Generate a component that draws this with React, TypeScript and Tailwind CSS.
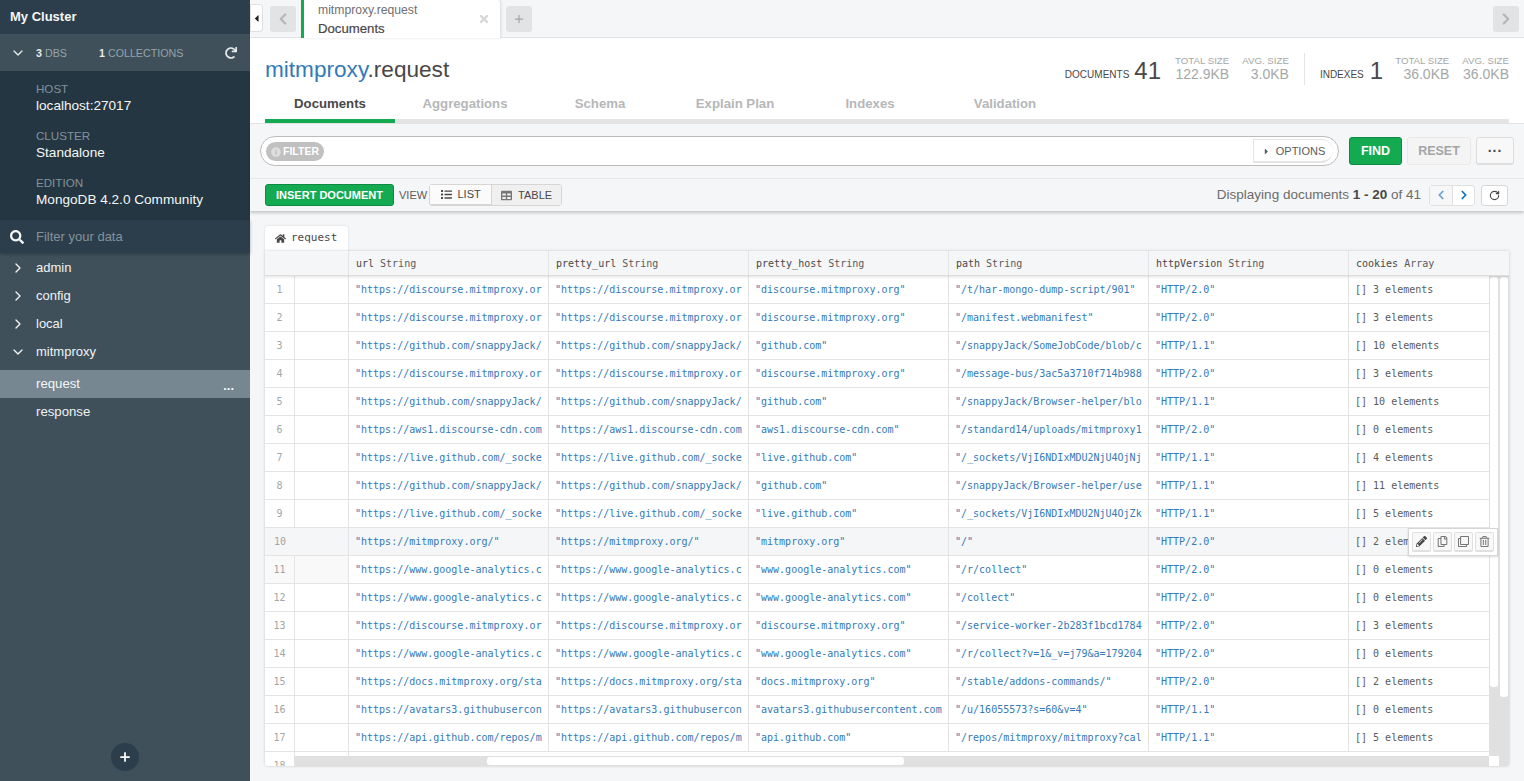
import { ChevronDown, ChevronRight, ChevronLeft, RotateCw, Plus } from "lucide-react";
import { FaHome, FaList, FaTable, FaInfoCircle, FaCaretRight, FaCaretLeft, FaSearch, FaRedo, FaTimes, FaPencilAlt, FaRegClone, FaRegCopy, FaRegTrashAlt } from "react-icons/fa";

const sans = "font-['Liberation_Sans',Arial,sans-serif]";
const mono = "font-['DejaVu_Sans_Mono',monospace]";

const rows = [
  ["https://discourse.mitmproxy.or", "discourse.mitmproxy.org", "/t/har-mongo-dump-script/901", "HTTP/2.0", "3"],
  ["https://discourse.mitmproxy.or", "discourse.mitmproxy.org", "/manifest.webmanifest", "HTTP/2.0", "3"],
  ["https://github.com/snappyJack/", "github.com", "/snappyJack/SomeJobCode/blob/c", "HTTP/1.1", "10"],
  ["https://discourse.mitmproxy.or", "discourse.mitmproxy.org", "/message-bus/3ac5a3710f714b988", "HTTP/2.0", "3"],
  ["https://github.com/snappyJack/", "github.com", "/snappyJack/Browser-helper/blo", "HTTP/1.1", "10"],
  ["https://aws1.discourse-cdn.com", "aws1.discourse-cdn.com", "/standard14/uploads/mitmproxy1", "HTTP/2.0", "0"],
  ["https://live.github.com/_socke", "live.github.com", "/_sockets/VjI6NDIxMDU2NjU4OjNj", "HTTP/1.1", "4"],
  ["https://github.com/snappyJack/", "github.com", "/snappyJack/Browser-helper/use", "HTTP/1.1", "11"],
  ["https://live.github.com/_socke", "live.github.com", "/_sockets/VjI6NDIxMDU2NjU4OjZk", "HTTP/1.1", "5"],
  ["https://mitmproxy.org/\"", "mitmproxy.org", "/", "HTTP/2.0", "2"],
  ["https://www.google-analytics.c", "www.google-analytics.com", "/r/collect", "HTTP/2.0", "0"],
  ["https://www.google-analytics.c", "www.google-analytics.com", "/collect", "HTTP/2.0", "0"],
  ["https://discourse.mitmproxy.or", "discourse.mitmproxy.org", "/service-worker-2b283f1bcd1784", "HTTP/2.0", "3"],
  ["https://www.google-analytics.c", "www.google-analytics.com", "/r/collect?v=1&_v=j79&a=179204", "HTTP/2.0", "0"],
  ["https://docs.mitmproxy.org/sta", "docs.mitmproxy.org", "/stable/addons-commands/", "HTTP/2.0", "2"],
  ["https://avatars3.githubusercon", "avatars3.githubusercontent.com", "/u/16055573?s=60&v=4", "HTTP/1.1", "0"],
  ["https://api.github.com/repos/m", "api.github.com", "/repos/mitmproxy/mitmproxy?cal", "HTTP/1.1", "5"],
  ["", "", "", "", ""],
];

const columns = [
  ["url", "String"],
  ["pretty_url", "String"],
  ["pretty_host", "String"],
  ["path", "String"],
  ["httpVersion", "String"],
];

function Stat({ label, value }: { label: string; value: string }) {
  return (
    <div className="flex flex-col items-end mt-[1px]">
      <div className="text-[9.7px] leading-[13px] text-[#a5a8a8]">{label}</div>
      <div className="text-[14px] leading-[13px] mt-[1px] text-[#a5a8a8]">{value}</div>
    </div>
  );
}

function DbRow({ name, open }: { name: string; open?: boolean }) {
  return (
    <div className="h-7 flex items-center text-[13px] text-[#f0f3f3]">
      <div className="w-9 pl-[10px] shrink-0">
        {open ? <ChevronDown size={16} /> : <ChevronRight size={16} />}
      </div>
      {name}
    </div>
  );
}

function Info({ label, value }: { label: string; value: string }) {
  return (
    <div className="pl-9 h-[47px]">
      <div className="text-[11.6px] leading-[16px] text-[#84929a]">{label}</div>
      <div className="text-[13.6px] leading-[18px] text-[#f5f7f7]">{value}</div>
    </div>
  );
}

function Sidebar() {
  return (
    <div className="w-[250px] shrink-0 h-full flex flex-col bg-[#3f505a] relative">
      <div className="h-[34px] shrink-0 bg-[#2c3e4c] pl-2.5 flex items-center text-[13px] font-bold text-[#f5f7f7]">My Cluster</div>
      <div className="h-[37px] shrink-0 bg-[#3f505a] flex items-center pt-px text-[10.7px] text-[#96a3a9]">
        <div className="w-9 pl-[10px] shrink-0 text-[#e6ebeb]"><ChevronDown size={16} /></div>
        <span className="w-[63px]"><b className="text-[#e6ebeb]">3</b> DBS</span>
        <span><b className="text-[#e6ebeb]">1</b> COLLECTIONS</span>
        <FaRedo size={12} className="ml-auto mr-[13px] text-[#e6ebeb]" />
      </div>
      <div className="h-[149px] shrink-0 bg-[#243642] pt-[10px]">
        <Info label="HOST" value="localhost:27017" />
        <Info label="CLUSTER" value="Standalone" />
        <Info label="EDITION" value="MongoDB 4.2.0 Community" />
      </div>
      <div className="h-[33px] shrink-0 bg-[#2c3e4c] flex items-center text-[13px] text-[#84929a] shadow-[0_1px_3px_rgba(0,0,0,0.3)]">
        <div className="w-9 pl-2.5 shrink-0 text-[#f5f7f7]"><FaSearch size={14} /></div>
        Filter your data
      </div>
      <div className="pt-[1px]">
        <DbRow name="admin" />
        <DbRow name="config" />
        <DbRow name="local" />
        <DbRow name="mitmproxy" open />
        <div className="h-7 mt-[4px] flex items-center pl-9 pr-4 text-[13.2px] text-[#f5f7f7] bg-[#768791] justify-between">
          request
          <span className="text-[13px] font-bold mt-1">...</span>
        </div>
        <div className="h-7 flex items-center pl-9 text-[13.2px] text-[#f0f3f3]">response</div>
      </div>
      <div className="absolute left-[111px] bottom-[10px] w-7 h-7 rounded-full bg-[#2c3e4c] flex items-center justify-center text-white">
        <Plus size={14} strokeWidth={3} />
      </div>
    </div>
  );
}

function TopTabs() {
  return (
    <div className="h-[38px] shrink-0 bg-[#f5f6f7] border-b border-[#e4e4e4] flex items-stretch">
      <div className="w-[13px] h-[28px] mt-[4px] bg-white border border-[#e0e0e0] rounded-r-[3px] flex items-center justify-center text-[#222]">
        <FaCaretLeft size={11} />
      </div>
      <div className="w-[26px] h-[26px] mt-[6px] ml-[7px] bg-[#e2e3e4] rounded-[3px] flex items-center justify-center text-[#b4b6b7]">
        <ChevronLeft size={18} strokeWidth={3} />
      </div>
      <div className="w-[199px] h-[38px] ml-[5px] bg-white border-l-[3px] border-[#13aa52] rounded-tr-[3px] pl-[14px] pt-[2px] relative z-10 shadow-[1px_0_3px_rgba(0,0,0,0.12)]">
        <div className="text-[12.2px] leading-[15px] mt-[1px] text-[#6f7071]">mitmproxy.request</div>
        <div className="text-[13.2px] leading-[20px] mt-[1px] text-[#494747] [-webkit-text-stroke:0.2px_#494747]">Documents</div>
        <FaTimes size={12} className="absolute right-[10px] top-[13px] text-[#d6d6d6]" />
      </div>
      <div className="w-[26px] h-[26px] mt-[6px] ml-[6px] bg-[#e2e3e4] rounded-[3px] flex items-center justify-center text-[#a3a5a6]">
        <Plus size={12} strokeWidth={2.5} />
      </div>
      <div className="w-[26px] h-[26px] mt-[6px] ml-auto mr-[5px] bg-[#e2e3e4] rounded-[3px] flex items-center justify-center text-[#b4b6b7]">
        <ChevronRight size={18} strokeWidth={3} />
      </div>
    </div>
  );
}

function Header() {
  const tabs = ["Aggregations", "Schema", "Explain Plan", "Indexes", "Validation"];
  return (
    <div className="h-[86px] shrink-0 bg-white border-b border-[#e4e4e4] px-[15px] flex flex-col">
      <div className="h-[53px] shrink-0 flex items-start justify-between">
        <div className="text-[22.6px] leading-[28px] mt-[18px] text-[#494747]">
          <span className="text-[#337ab7]">mitmproxy</span>.request
        </div>
        <div className="flex items-start mt-[15px]">
          <span className="text-[10px] leading-[12px] text-[#494747] mt-[16px] mr-[5px]">DOCUMENTS</span>
          <span className="text-[24px] leading-[28px] mt-[4px] text-[#494747] mr-[14px]">41</span>
          <Stat label="TOTAL SIZE" value="122.9KB" />
          <div className="w-[13px]" />
          <Stat label="AVG. SIZE" value="3.0KB" />
          <div className="w-px h-8 bg-[#e4e4e4] mx-[15px]" />
          <span className="text-[10px] leading-[12px] text-[#494747] mt-[16px] mr-[6px]">INDEXES</span>
          <span className="text-[24px] leading-[28px] mt-[4px] text-[#494747] mr-[12px]">1</span>
          <Stat label="TOTAL SIZE" value="36.0KB" />
          <div className="w-[13px]" />
          <Stat label="AVG. SIZE" value="36.0KB" />
        </div>
      </div>
      <div className="flex shrink-0 gap-[5px] h-[28px] border-b-[4px] border-[#e4e4e4] box-content">
        <div className="w-[130px] h-[28px] text-center text-[13.2px] font-bold text-[#494747] border-b-[4px] border-[#13aa52] leading-[26px] box-content">Documents</div>
        {tabs.map((t) => (
          <div key={t} className="w-[130px] text-[13.2px] font-bold text-[#b5b7b8] leading-[26px] text-center">{t}</div>
        ))}
      </div>
    </div>
  );
}

function QueryBar() {
  return (
    <div className="shrink-0 bg-[#f5f6f7] shadow-[0_2px_3px_rgba(0,0,0,0.2)] relative z-10">
      <div className="h-[55px] border-b border-[#e8e8e8] flex items-center pl-[10px] pr-[10px] gap-[5px]">
        <div className="flex-1 h-[30px] rounded-full border border-[#bcbcbc] bg-white flex items-center pl-[5px] pr-[5px] mr-[5px]">
          <div className="h-[19px] w-[58px] rounded-full bg-[#c0c0c0] flex items-center pl-[5px] pt-px text-[10.5px] font-bold text-white gap-[2px]">
            <FaInfoCircle size={10} className="text-[#dedede]" /> FILTER
          </div>
          <div className="ml-auto h-[24px] w-[80px] border border-[#e4e4e4] border-b-2 border-r-0 rounded-r-full flex items-center justify-center gap-[5px] pt-px text-[11px] text-[#5b5b5b]">
            <FaCaretRight size={9} /> OPTIONS
          </div>
        </div>
        <div className="w-[53px] h-7 rounded-[3px] bg-[#13aa52] border border-[#0f8a42] flex items-center justify-center text-[12.5px] font-bold text-white">FIND</div>
        <div className="w-[64px] h-7 rounded-[3px] bg-[#f4f4f4] border border-[#e8e8e8] flex items-center justify-center text-[12.5px] font-bold text-[#a3a5a6]">RESET</div>
        <div className="w-[38px] h-7 rounded-[3px] bg-[#f8f8f8] border border-[#dedede] border-b-2 flex items-center justify-center text-[#494747] font-bold text-[14px] tracking-[1px]">
          <span className="-mt-1.5">...</span>
        </div>
      </div>
      <div className="h-[32px] flex items-center pl-[15px] pr-[15px]">
        <div className="w-[129px] h-[22px] rounded-[3px] bg-[#13aa52] border border-[#0f8a42] flex items-center justify-center text-[11px] font-bold text-white">INSERT DOCUMENT</div>
        <span className="text-[11px] text-[#5b5b5b] ml-[5px]">VIEW</span>
        <div className="flex ml-[2px] h-[22px] rounded-[3px] border border-[#d6d6d6]">
          <div className="w-[61px] bg-[#fbfbfb] border-b border-[#d6d6d6] flex items-center justify-center gap-[6px] text-[11px] text-[#494747]">
            <FaList size={11} /> LIST
          </div>
          <div className="w-[70px] bg-[#f0f0f0] border-l border-[#d6d6d6] flex items-center justify-center gap-[6px] text-[11px] text-[#494747]">
            <FaTable size={11} className="text-[#777]" /> TABLE
          </div>
        </div>
        <div className="ml-auto text-[13.5px] text-[#6b6c6d]">
          Displaying documents <b className="text-[#494747]">1 - 20</b> of 41
        </div>
        <div className="flex ml-[8px] h-[21px] rounded-[3px] border border-[#e0e0e0] bg-white">
          <div className="w-[22px] flex items-center justify-center text-[#64a0d8] bg-[#f7f7f7]"><ChevronLeft size={14} strokeWidth={3} /></div>
          <div className="w-[22px] flex items-center justify-center text-[#0e6fc0] border-l border-[#e0e0e0]"><ChevronRight size={14} strokeWidth={3} /></div>
        </div>
        <div className="w-[27px] h-[21px] ml-[6px] mr-px rounded-[3px] border border-[#d6d6d6] bg-white flex items-center justify-center text-[#494747]">
          <RotateCw size={11} strokeWidth={2.5} />
        </div>
      </div>
    </div>
  );
}

function Table() {
  const cell = "w-[200px] shrink-0 border-r border-[#e4e4e4] pl-[6px] leading-[27px] text-[#337ab7] overflow-hidden whitespace-pre";
  return (
    <div className={`flex-1 min-h-0 pt-[15px] px-[15px] pb-[15px] bg-[#f5f6f7] flex flex-col ${mono}`}>
      <div className="h-[25px] w-[83px] shrink-0 bg-white rounded-t-[3px] shadow-[0_0_2px_rgba(0,0,0,0.15)] flex items-center pl-[10px] gap-[5px] text-[11px] text-[#494747]">
        <FaHome size={11} /> request
      </div>
      <div className="flex-1 min-h-0 bg-white shadow-[0_0_3px_rgba(0,0,0,0.2)] rounded-b-[3px] relative overflow-hidden w-[1244px]">
        <div className="flex h-[25px] border-b border-[#dedede] bg-[#f5f6f7] shadow-[0_1px_3px_rgba(0,0,0,0.12)] text-[10px] text-[#5b5b5b] relative z-10">
          <div className="w-[84px] shrink-0 border-r border-[#e4e4e4]" />
          {columns.map(([n, t]) => (
            <div key={n} className="w-[200px] shrink-0 border-r border-[#e4e4e4] pl-[7px] flex items-center gap-[6px]">
              <span className="text-[#494747]">{n}</span> {t}
            </div>
          ))}
          <div className="flex-1 pl-[7px] flex items-center gap-[6px]"><span className="text-[#494747]">cookies</span> Array</div>
        </div>
        {rows.map((r, i) => (
          <div key={i} className={`flex h-[28px] border-b border-[#e4e4e4] text-[10px] ${i === 9 ? "bg-[#f5f6f7]" : ""}`}>
            <div className={`w-[30px] shrink-0 text-center text-[#a3a5a6] leading-[27px] ${i === 9 ? "" : "border-r border-[#e4e4e4]"} ${i === 10 ? "bg-[#f9f9f9]" : ""}`}>{i + 1}</div>
            <div className={`w-[54px] shrink-0 border-r border-[#e4e4e4] ${i === 10 ? "bg-[#f9f9f9]" : ""}`} />
            {r[4] === "" ? null : (
              <>
                <div className={cell}>"{r[0]}</div>
                <div className={cell}>"{r[0]}</div>
                <div className={cell}>"{r[1]}{r[1].length < 30 ? '"' : ""}</div>
                <div className={cell}>"{r[2]}{r[2].length < 30 ? '"' : ""}</div>
                <div className={cell}>"{r[3]}"</div>
                <div className="flex-1 pl-[6px] leading-[27px] text-[#5b5b5b] whitespace-pre">[] {r[4]} elements</div>
              </>
            )}
          </div>
        ))}
        <div className="absolute right-[10px] top-[25px] bottom-0 w-[10px] bg-[#e0e0e0]">
          <div className="absolute top-px left-px right-px h-[410px] bg-white rounded-[3px]" />
          <div className="absolute bottom-0 left-0 right-0 h-[10px] bg-white" />
        </div>
        <div className="absolute right-0 top-[25px] bottom-0 w-[10px] bg-[#e0e0e0]">
          <div className="absolute top-px left-px right-px h-[420px] bg-white rounded-[3px]" />
        </div>
        <div className="absolute left-[30px] right-[20px] bottom-0 h-[10px] bg-[#e0e0e0]">
          <div className="absolute left-[192px] w-[417px] top-px bottom-px bg-white rounded-[3px]" />
        </div>
        <div className="absolute left-[1143px] top-[277px] w-[90px] h-[28px] bg-white border border-[#d6d6d6] shadow-[0_1px_2px_rgba(0,0,0,0.15)] flex items-center justify-center gap-[2px] z-20">
          {[FaPencilAlt, FaRegCopy, FaRegClone, FaRegTrashAlt].map((I, k) => (
            <div key={k} className={`w-[19px] h-[20px] rounded-[2px] bg-[#f8f8f8] border border-[#e0e0e0] border-b-2 flex items-center justify-center ${k === 0 ? "text-[#494747]" : "text-[#777]"}`}>
              <I size={11} />
            </div>
          ))}
        </div>
      </div>
    </div>
  );
}

export default function App() {
  return (
    <div className={`w-[1524px] h-[781px] flex overflow-hidden ${sans}`}>
      <Sidebar />
      <div className="flex-1 min-w-0 flex flex-col">
        <TopTabs />
        <Header />
        <QueryBar />
        <Table />
      </div>
    </div>
  );
}
